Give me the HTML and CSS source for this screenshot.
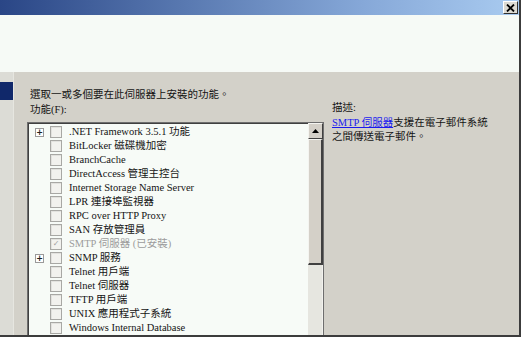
FILE: index.html
```html
<!DOCTYPE html>
<html lang="zh-Hant">
<head>
<meta charset="utf-8">
<title>新增功能精靈</title>
<link rel="stylesheet" href="styles.css">
</head>
<body>
<div class="window">
  <div class="titlebar">
    <span class="close-btn">
      <svg width="9" height="8" viewBox="0 0 9 8"><path d="M1 0.5 L8 7.5 M8 0.5 L1 7.5" stroke="#000" stroke-width="1.8"/></svg>
    </span>
  </div>
  <div class="header"></div>
  <div class="main">
    <div class="sidebar">
      <div class="step-active"></div>
    </div>
    <div class="content">
      <p class="intro">選取一或多個要在此伺服器上安裝的功能。</p>
      <div class="columns">
        <div class="features">
          <div class="label">功能(F):</div>
          <div class="listbox">
            <ul class="items">
              <li class="item"><span class="expander">+</span><span class="check"></span><span class="text">.NET Framework 3.5.1 功能</span></li>
              <li class="item"><span class="expander empty"></span><span class="check"></span><span class="text">BitLocker 磁碟機加密</span></li>
              <li class="item"><span class="expander empty"></span><span class="check"></span><span class="text">BranchCache</span></li>
              <li class="item"><span class="expander empty"></span><span class="check"></span><span class="text">DirectAccess 管理主控台</span></li>
              <li class="item"><span class="expander empty"></span><span class="check"></span><span class="text">Internet Storage Name Server</span></li>
              <li class="item"><span class="expander empty"></span><span class="check"></span><span class="text">LPR 連接埠監視器</span></li>
              <li class="item"><span class="expander empty"></span><span class="check"></span><span class="text">RPC over HTTP Proxy</span></li>
              <li class="item"><span class="expander empty"></span><span class="check"></span><span class="text">SAN 存放管理員</span></li>
              <li class="item disabled"><span class="expander empty"></span><span class="check checked">✓</span><span class="text">SMTP 伺服器 (已安裝)</span></li>
              <li class="item"><span class="expander">+</span><span class="check"></span><span class="text">SNMP 服務</span></li>
              <li class="item"><span class="expander empty"></span><span class="check"></span><span class="text">Telnet 用戶端</span></li>
              <li class="item"><span class="expander empty"></span><span class="check"></span><span class="text">Telnet 伺服器</span></li>
              <li class="item"><span class="expander empty"></span><span class="check"></span><span class="text">TFTP 用戶端</span></li>
              <li class="item"><span class="expander empty"></span><span class="check"></span><span class="text">UNIX 應用程式子系統</span></li>
              <li class="item"><span class="expander empty"></span><span class="check"></span><span class="text">Windows Internal Database</span></li>
            </ul>
            <div class="scrollbar">
              <div class="sb-up">
                <svg width="7" height="4" viewBox="0 0 7 4"><path d="M0 4 L3.5 0 L7 4 Z" fill="#000"/></svg>
              </div>
              <div class="sb-thumb"></div>
              <div class="sb-track"></div>
            </div>
          </div>
        </div>
        <div class="description">
          <div class="label">描述:</div>
          <div class="desc-line"><a class="link" href="#">SMTP 伺服器</a><span>支援在電子郵件系統</span></div>
          <div class="desc-line"><span>之間傳送電子郵件。</span></div>
        </div>
      </div>
    </div>
  </div>
</div>
</body>
</html>
```
FILE: styles.css
```css
* {
  box-sizing: border-box;
}

html, body {
  margin: 0;
  padding: 0;
  background: #ffffff;
}

body {
  font-family: "Liberation Serif", "Noto Sans CJK TC", serif;
  font-size: 10.5px;
  color: #141414;
  width: 525px;
  height: 339px;
  overflow: hidden;
}

.window {
  width: 521px;
  height: 337px;
  display: flex;
  flex-direction: column;
  border-right: 2px solid #3c3c3c;
  border-bottom: 2px solid #3c3c3c;
  overflow: hidden;
}

.titlebar {
  height: 15px;
  flex: none;
  background: linear-gradient(to right, #2a4686 0%, #5878b0 35%, #86a8d8 70%, #a9cbf0 100%);
  display: flex;
  justify-content: flex-end;
  align-items: flex-start;
  padding: 1px 1px 0 0;
}

.close-btn {
  width: 15px;
  height: 13px;
  background: #dcdad2;
  border-top: 1px solid #ffffff;
  border-left: 1px solid #ffffff;
  border-right: 1px solid #303030;
  border-bottom: 1px solid #303030;
  display: flex;
  align-items: center;
  justify-content: center;
}

.header {
  height: 57px;
  flex: none;
  background: #f6faf6;
}

.main {
  flex: 1;
  display: flex;
  background: #d3d1c9;
  min-height: 0;
}

.sidebar {
  width: 14px;
  flex: none;
  background: #dcdcd6;
  border-right: 1px solid #e6e6e0;
  padding-top: 10px;
}

.step-active {
  height: 18px;
  background: #10286a;
}

.content {
  flex: 1;
  padding: 16px 0 0 16px;
  min-width: 0;
}

.intro {
  margin: 0;
  line-height: 14px;
  height: 15px;
}

.columns {
  display: flex;
  gap: 8px;
}

.features {
  width: 297px;
  flex: none;
  margin-left: -3px;
}

.features .label {
  padding-left: 3px;
  line-height: 14px;
  height: 19px;
}

.description {
  flex: 1;
  margin-top: -2px;
  min-width: 0;
}

.description .label {
  line-height: 14px;
  height: 15px;
}

.desc-line {
  line-height: 14px;
  white-space: nowrap;
}

.listbox {
  height: 220px;
  display: flex;
  background: #f7fbf7;
  border-top: 1px solid #6e6e6e;
  border-left: 1px solid #6e6e6e;
  border-right: 1px solid #6e6e6e;
  box-shadow: inset 1px 1px 0 #404040;
}

.items {
  list-style: none;
  margin: 0;
  padding: 2px 0 0 7px;
  flex: 1;
  min-width: 0;
}

.item {
  height: 14px;
  display: flex;
  align-items: center;
  white-space: nowrap;
}

.expander {
  width: 9px;
  height: 9px;
  flex: none;
  border: 1px solid #9a9a9a;
  background: #ffffff;
  font-family: "DejaVu Sans", sans-serif;
  font-size: 8px;
  line-height: 7px;
  text-align: center;
  font-weight: bold;
  color: #202020;
  margin-right: 6px;
}

.expander.empty {
  border-color: transparent;
  background: transparent;
}

.check {
  width: 12px;
  height: 12px;
  flex: none;
  border: 1px solid #a8a8a4;
  background: #f2f2ee;
  box-shadow: inset 1px 1px 0 #e2e2de;
  margin-right: 7px;
  font-family: "DejaVu Sans", sans-serif;
  font-size: 8px;
  line-height: 10px;
  text-align: center;
  color: #a0a0a0;
}

.text {
  line-height: 14px;
}

.item.disabled .text {
  color: #9c9c9c;
}

.scrollbar {
  width: 15px;
  flex: none;
  display: flex;
  flex-direction: column;
}

.sb-up {
  height: 16px;
  flex: none;
  background: #d4d0c8;
  border-top: 1px solid #f4f4f0;
  border-left: 1px solid #f4f4f0;
  border-right: 1px solid #404040;
  border-bottom: 1px solid #404040;
  display: flex;
  align-items: center;
  justify-content: center;
}

.sb-thumb {
  height: 126px;
  flex: none;
  background: #d4d0c8;
  border-top: 1px solid #f4f4f0;
  border-left: 1px solid #f4f4f0;
  border-right: 2px solid #404040;
  border-bottom: 2px solid #404040;
}

.sb-track {
  flex: 1;
  background: #e6e6e0;
  border-right: 1px solid #f2f2ee;
}

.link {
  color: #1a1aee;
  text-decoration: underline;
}
```
